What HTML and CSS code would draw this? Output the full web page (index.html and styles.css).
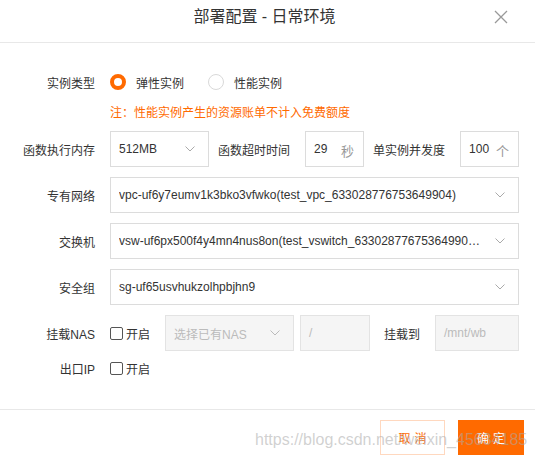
FILE: index.html
```html
<!DOCTYPE html>
<html>
<head>
<meta charset="utf-8">
<link rel="stylesheet" href="styles.css">
</head>
<body>
<div class="dialog">
  <div class="header">
    <div class="title">部署配置 - 日常环境</div>
    <svg class="close" width="14" height="14" viewBox="0 0 14 14"><path d="M1 1L13 13M13 1L1 13" stroke="#999" stroke-width="1.3" fill="none"/></svg>
  </div>
  <div class="body">
    <div class="row row-radio">
      <div class="label">实例类型</div>
      <div class="radios">
        <span class="radio checked"></span><span class="radio-text">弹性实例</span>
        <span class="radio"></span><span class="radio-text">性能实例</span>
      </div>
    </div>
    <div class="row row-note">
      <div class="label"></div>
      <div class="note">注：性能实例产生的资源账单不计入免费额度</div>
    </div>
    <div class="row row-box">
      <div class="label">函数执行内存</div>
      <div class="box mem"><span class="val">512MB</span><svg class="chev" width="10" height="6" viewBox="0 0 10 6"><path d="M0.5 0.5L5 5L9.5 0.5" stroke="#aaa" stroke-width="1" fill="none"/></svg></div>
      <div class="inl-label l1">函数超时时间</div>
      <div class="box small"><span class="val">29</span><span class="unit">秒</span></div>
      <div class="inl-label l2">单实例并发度</div>
      <div class="box small"><span class="val">100</span><span class="unit">个</span></div>
    </div>
    <div class="row row-box">
      <div class="label">专有网络</div>
      <div class="box wide"><span class="val">vpc-uf6y7eumv1k3bko3vfwko(test_vpc_633028776753649904)</span><svg class="chev" width="10" height="6" viewBox="0 0 10 6"><path d="M0.5 0.5L5 5L9.5 0.5" stroke="#aaa" stroke-width="1" fill="none"/></svg></div>
    </div>
    <div class="row row-box">
      <div class="label">交换机</div>
      <div class="box wide"><span class="val">vsw-uf6px500f4y4mn4nus8on(test_vswitch_63302877675364990…</span><svg class="chev" width="10" height="6" viewBox="0 0 10 6"><path d="M0.5 0.5L5 5L9.5 0.5" stroke="#aaa" stroke-width="1" fill="none"/></svg></div>
    </div>
    <div class="row row-box">
      <div class="label">安全组</div>
      <div class="box wide"><span class="val">sg-uf65usvhukzolhpbjhn9</span><svg class="chev" width="10" height="6" viewBox="0 0 10 6"><path d="M0.5 0.5L5 5L9.5 0.5" stroke="#aaa" stroke-width="1" fill="none"/></svg></div>
    </div>
    <div class="row row-box">
      <div class="label">挂载NAS</div>
      <span class="check"></span><span class="check-text">开启</span>
      <div class="box disabled nas"><span class="ph">选择已有NAS</span><svg class="chev" width="10" height="6" viewBox="0 0 10 6"><path d="M0.5 0.5L5 5L9.5 0.5" stroke="#bbb" stroke-width="1" fill="none"/></svg></div>
      <div class="box disabled path"><span class="ph">/</span></div>
      <div class="inl-label l3">挂载到</div>
      <div class="box disabled mnt"><span class="ph">/mnt/wb</span></div>
    </div>
    <div class="row row-ip">
      <div class="label">出口IP</div>
      <span class="check"></span><span class="check-text">开启</span>
    </div>
  </div>
  <div class="footer">
    <button class="btn cancel">取消</button>
    <button class="btn ok">确定</button>
  </div>
  <div class="watermark">https://blog.csdn.net/weixin_45634185</div>
</div>
</body>
</html>
```
FILE: styles.css
```css
* { box-sizing: border-box; }
html, body { margin: 0; padding: 0; background: #fff; }
body {
  font-family: "Liberation Sans", "Noto Sans CJK SC", sans-serif;
  font-size: 12px;
  color: #333;
  width: 535px;
  height: 461px;
  overflow: hidden;
}
.dialog { position: relative; width: 535px; height: 461px; }
.header {
  position: relative;
  height: 43px;
  border-bottom: 1px solid #e8e8e8;
  padding-top: 6px;
  text-align: center;
}
.title { font-size: 16px; line-height: 22px; color: #333; padding-right: 6px; }
.close { position: absolute; left: 494px; top: 10px; }
.body { padding: 29px 16px 32px 0; }
.row { display: flex; align-items: center; }
.label { width: 95px; margin-right: 15px; text-align: right; flex-shrink: 0; color: #333; white-space: nowrap; }
.row-radio { height: 20px; margin-bottom: 10px; }
.radios { display: flex; align-items: center; }
.radio {
  width: 16px; height: 16px; border-radius: 50%;
  border: 1px solid #d9d9d9; background: #fff; display: inline-block; flex-shrink: 0;
}
.radio.checked { border: 4px solid #ff6a00; }
.radio-text { margin-left: 10px; margin-right: 24px; white-space: nowrap; }
.row-note { height: 19px; margin-bottom: 10px; }
.note { color: #ff6a00; white-space: nowrap; }
.row-box { height: 36px; margin-bottom: 10px; }
.box {
  height: 36px; border: 1px solid #dcdcdc; background: #fff;
  display: flex; align-items: center; padding: 0 9px 0 8px; flex-shrink: 0;
}
.val { color: #333; white-space: nowrap; flex: 1; overflow: hidden; }
.chev { flex-shrink: 0; margin-left: 8px; margin-right: 4px; }
.mem { width: 99px; }
.small { width: 59px; }
.unit { color: #999; font-size: 13px; margin-top: 2px; }
.wide { flex: 1; }
.inl-label { white-space: nowrap; flex-shrink: 0; }
.l1 { margin-left: 9px; margin-right: 15px; }
.l2 { margin-left: 9px; margin-right: 15px; }
.l3 { margin-left: 14px; margin-right: 15px; }
.check {
  width: 13px; height: 13px; border: 1px solid #555; border-radius: 2px;
  background: #fff; display: inline-block; flex-shrink: 0;
}
.check-text { margin-left: 3px; white-space: nowrap; flex-shrink: 0; }
.disabled { background: #f5f5f5; border-color: #e3e3e3; }
.ph { color: #bbb; flex: 1; white-space: nowrap; }
.nas { width: 129px; margin-left: 15px; }
.path { width: 70px; margin-left: 6px; }
.mnt { width: 84px; }
.row-ip { height: 18px; margin-top: -2px; }
.footer {
  border-top: 1px solid #e8e8e8;
  display: flex; justify-content: flex-end; gap: 13px;
  padding: 10px 11px 0 0;
}
.btn {
  height: 35px; font-family: inherit; font-size: 12px; cursor: pointer;
  letter-spacing: 4px; padding: 0 0 0 4px;
}
.cancel { width: 65px; background: #fff; border: 1px solid #ffd8bf; color: #ff6a00; }
.ok { width: 66px; background: #ff6a00; border: 1px solid #ff6a00; color: #fff; }
.watermark {
  position: absolute; left: 255px; top: 431px;
  font-size: 16px; color: rgba(170, 170, 170, 0.55);
  white-space: nowrap; pointer-events: none;
  font-family: "Liberation Sans", sans-serif;
}
```
